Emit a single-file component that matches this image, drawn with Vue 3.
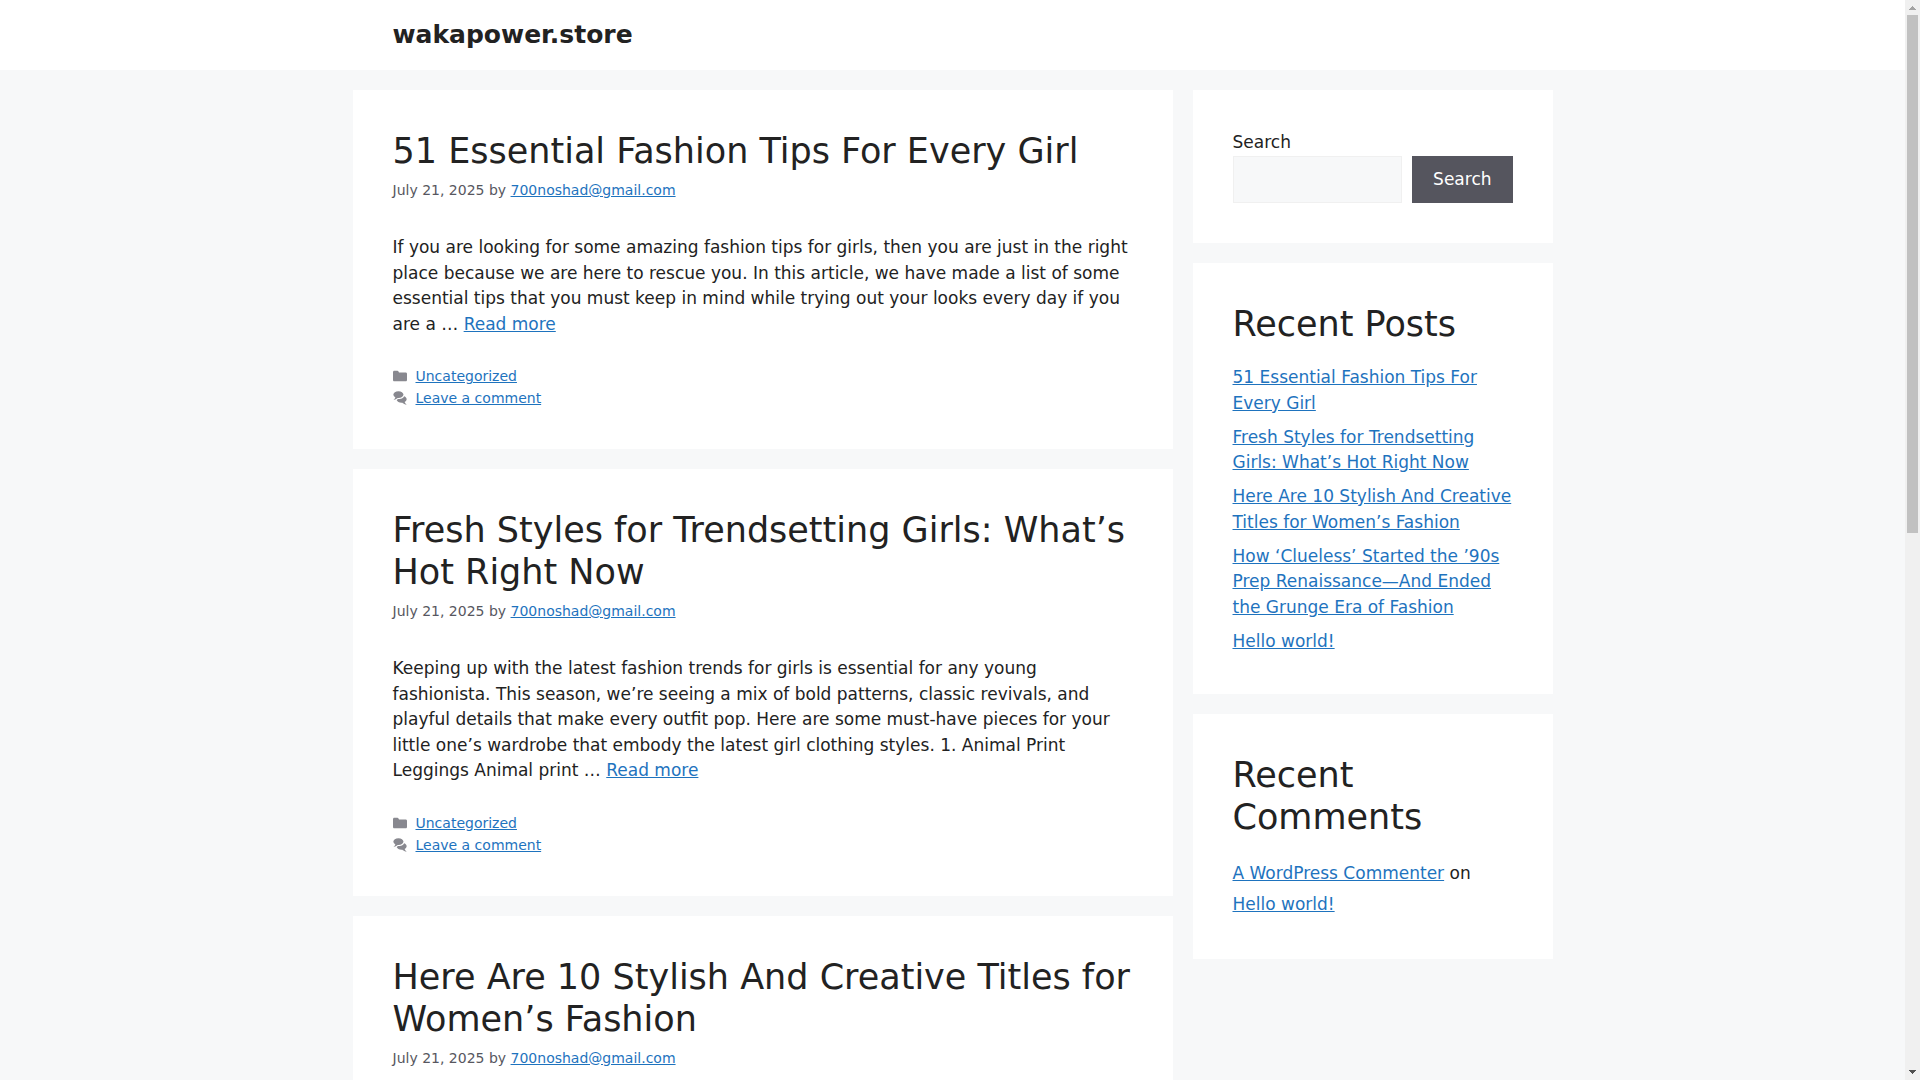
<script setup>
import { ref } from 'vue'

const query = ref('')

const posts = [
  {
    title: '51 Essential Fashion Tips For Every Girl',
    excerpt:
      'If you are looking for some amazing fashion tips for girls, then you are just in the right place because we are here to rescue you. In this article, we have made a list of some essential tips that you must keep in mind while trying out your looks every day if you are a …',
  },
  {
    title: 'Fresh Styles for Trendsetting Girls: What’s Hot Right Now',
    excerpt:
      'Keeping up with the latest fashion trends for girls is essential for any young fashionista. This season, we’re seeing a mix of bold patterns, classic revivals, and playful details that make every outfit pop. Here are some must-have pieces for your little one’s wardrobe that embody the latest girl clothing styles. 1. Animal Print Leggings Animal print …',
  },
  {
    title: 'Here Are 10 Stylish And Creative Titles for Women’s Fashion',
    excerpt: '',
  },
]

const recentPosts = [
  '51 Essential Fashion Tips For Every Girl',
  'Fresh Styles for Trendsetting Girls: What’s Hot Right Now',
  'Here Are 10 Stylish And Creative Titles for Women’s Fashion',
  'How ‘Clueless’ Started the ’90s Prep Renaissance—And Ended the Grunge Era of Fashion',
  'Hello world!',
]
</script>

<template>
  <div class="viewport">
    <div class="page">
      <header class="site-header">
        <div class="container header-inner">
          <a class="site-title" href="#">wakapower.store</a>
        </div>
      </header>

      <div class="container columns">
        <main class="content">
          <article v-for="post in posts" :key="post.title" class="card">
            <h2 class="heading post-title"><a href="#">{{ post.title }}</a></h2>
            <div class="meta">July 21, 2025 by <a href="#">700noshad@gmail.com</a></div>
            <template v-if="post.excerpt">
              <p class="excerpt">{{ post.excerpt }} <a href="#">Read more</a></p>
              <footer class="post-footer">
                <div class="footer-line">
                  <svg class="icon" viewBox="0 0 512 512" aria-hidden="true">
                    <path d="M0 112c0-26.51 21.49-48 48-48h110.014a48 48 0 0143.592 27.907l12.349 26.791A16 16 0 00228.486 128H464c26.51 0 48 21.49 48 48v224c0 26.51-21.49 48-48 48H48c-26.51 0-48-21.49-48-48V112z" />
                  </svg>
                  <a href="#">Uncategorized</a>
                </div>
                <div class="footer-line">
                  <svg class="icon" viewBox="0 0 512 512" aria-hidden="true">
                    <path d="M132.838 329.973a435.298 435.298 0 0016.769-9.004c13.363-7.574 26.587-16.142 37.419-25.507 7.544.597 15.27.925 23.098.925 54.905 0 105.634-15.311 143.285-41.28 23.728-16.365 43.115-37.692 54.155-62.645 54.739 22.205 91.498 63.272 91.498 110.286 0 42.186-29.558 79.498-75.09 102.828 23.46 49.216 75.09 101.709 75.09 101.709s-115.837-38.35-154.424-78.46c-9.956 1.12-20.297 1.758-30.793 1.758-88.727 0-162.927-43.071-181.007-100.61z" />
                    <path d="M383.371 132.502c0 70.603-82.961 127.787-185.216 127.787-10.496 0-20.837-.639-30.793-1.757-38.587 40.093-154.424 78.42-154.424 78.42s51.63-52.472 75.09-101.67c-45.532-23.321-75.09-60.619-75.09-102.79C12.938 61.9 95.9 4.716 198.155 4.716 300.41 4.715 383.37 61.9 383.37 132.502z" />
                  </svg>
                  <a href="#">Leave a comment</a>
                </div>
              </footer>
            </template>
          </article>
        </main>

        <aside class="sidebar">
          <section class="card">
            <form role="search" @submit.prevent>
              <label class="search-label" for="site-search">Search</label>
              <div class="search-row">
                <input id="site-search" v-model="query" class="search-input" type="search" />
                <button class="search-button" type="submit">Search</button>
              </div>
            </form>
          </section>

          <section class="card">
            <h2 class="heading widget-title">Recent Posts</h2>
            <ul class="recent-posts">
              <li v-for="item in recentPosts" :key="item"><a href="#">{{ item }}</a></li>
            </ul>
          </section>

          <section class="card">
            <h2 class="heading widget-title">Recent Comments</h2>
            <ol class="recent-comments">
              <li><a href="#">A WordPress Commenter</a> on <a href="#">Hello world!</a></li>
            </ol>
          </section>
        </aside>
      </div>
    </div>

    <div class="scrollbar" aria-hidden="true">
      <svg class="arrow arrow-up" viewBox="0 0 15 15"><path d="M7 6h1v1h1v1h1v1h1v1H4V9h1V8h1V7h1z" /></svg>
      <div class="track"><div class="thumb"></div></div>
      <svg class="arrow arrow-down" viewBox="0 0 15 15"><path d="M4 5h7v1h-1v1H9v1H8v1H7V8H6V7H5V6H4z" /></svg>
    </div>
  </div>
</template>

<style>
body {
  margin: 0;
  background: #f7f8f9;
}
</style>

<style scoped>
.viewport {
  display: flex;
  height: 100vh;
  overflow: hidden;
  color: #222222;
  background: #f7f8f9;
  font-family: "DejaVu Sans", sans-serif;
  font-size: 17px;
  line-height: 1.5;
}

.page {
  flex: 1;
  min-width: 0;
}

.container {
  box-sizing: border-box;
  max-width: 1200px;
  margin: 0 auto;
}

a {
  color: #1e73be;
  text-decoration: underline;
}

.site-header {
  background: #ffffff;
}

.header-inner {
  display: flex;
  padding: 20px 40px;
}

.site-title {
  color: #222222;
  font-size: 25px;
  font-weight: 700;
  line-height: 30px;
  text-decoration: none;
}

.columns {
  display: flex;
  align-items: flex-start;
  gap: 20px;
  padding-top: 20px;
}

.content,
.sidebar {
  display: flex;
  flex-direction: column;
  gap: 20px;
  min-width: 0;
}

.content {
  flex: 1;
}

.sidebar {
  flex: 0 0 30%;
}

.card {
  box-sizing: border-box;
  padding: 40px;
  background: #ffffff;
}

.heading {
  margin: 0;
  font-size: 35px;
  font-weight: 400;
  line-height: 42px;
}

.post-title a {
  color: #222222;
  text-decoration: none;
}

.meta {
  margin-top: 7px;
  color: #575760;
  font-size: 14px;
  line-height: 22px;
}

.excerpt {
  margin: 34px 0 0;
}

.post-footer {
  margin-top: 28px;
  font-size: 14px;
  line-height: 22px;
}

.footer-line {
  display: flex;
  align-items: center;
  gap: 9px;
}

.icon {
  width: 14px;
  height: 14px;
  fill: #575760;
  opacity: 0.7;
}

.search-label {
  display: block;
}

.search-row {
  display: flex;
  gap: 10px;
}

.search-input {
  box-sizing: border-box;
  flex: 1;
  width: 100%;
  min-width: 0;
  padding: 10px 15px;
  border: 1px solid #f0f0f0;
  border-radius: 0;
  color: #222222;
  background: #f7f8f9;
  font: inherit;
  appearance: none;
}

.search-button {
  padding: 10px 20px;
  border: 1px solid #55555e;
  color: #ffffff;
  background: #55555e;
  font: inherit;
  cursor: pointer;
}

.widget-title {
  margin-bottom: 20px;
}

.recent-posts,
.recent-comments {
  margin: 0;
  padding: 0;
  list-style: none;
}

.recent-posts li + li {
  margin-top: 0.5em;
}

.recent-comments {
  line-height: 1.8;
}

.scrollbar {
  display: flex;
  flex: 0 0 15px;
  flex-direction: column;
  background: #f0f0f0;
}

.arrow {
  width: 15px;
  height: 15px;
}

.arrow-up {
  fill: #a3a3a3;
}

.arrow-down {
  fill: #505050;
}

.track {
  flex: 1;
  padding: 0 2px;
}

.thumb {
  height: 49.3%;
  background: #c1c1c1;
}
</style>
